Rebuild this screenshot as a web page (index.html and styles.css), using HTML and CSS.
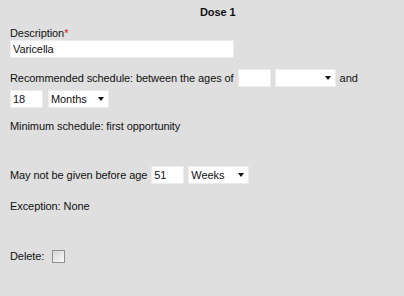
FILE: index.html
```html
<!DOCTYPE html>
<html lang="en">
<head>
    <meta charset="UTF-8">
    <title>Dose 1</title>
    <link rel="stylesheet" href="styles.css">
</head>
<body>
    <form class="dose-form">
        <h2 class="dose-title">Dose 1</h2>

        <label class="field-label" for="description">Description<span class="required">*</span></label>
        <input type="text" id="description" class="text-input wide" value="Varicella">

        <div class="row recommended">
            <span>Recommended schedule: between the ages of</span>
            <input type="text" class="text-input small" value="">
            <span class="select-wrap blank"><select class="select-input"><option></option></select></span>
            <span>and</span>
        </div>
        <div class="row second">
            <input type="text" class="text-input small" value="18">
            <span class="select-wrap"><select class="select-input"><option>Months</option></select></span>
        </div>

        <p class="info minimum">Minimum schedule: first opportunity</p>

        <div class="row not-before">
            <span>May not be given before age</span>
            <input type="text" class="text-input small" value="51">
            <span class="select-wrap"><select class="select-input"><option>Weeks</option></select></span>
        </div>

        <p class="info exception">Exception: None</p>

        <div class="row delete-row">
            <label for="deleteDose">Delete:</label>
            <input type="checkbox" id="deleteDose" class="check">
        </div>
    </form>
</body>
</html>
```

FILE: styles.css
```css
body {
    margin: 0;
    padding: 0 10px;
    background-color: #dfdfdf;
    font-family: "Liberation Sans", Arial, sans-serif;
    font-size: 11px;
    letter-spacing: -0.08px;
    line-height: 14px;
    color: #111111;
}

.dose-title {
    margin: 5px 0 0;
    padding-left: 190px;
    font-size: 11px;
    line-height: 14px;
    font-weight: bold;
}

.field-label {
    display: block;
    margin-top: 7px;
}

.required {
    color: #d02020;
}

.text-input,
.select-input {
    box-sizing: border-box;
    height: 18px;
    margin: 0;
    padding: 0 2px;
    border: 1px solid #ececec;
    background-color: #ffffff;
    font-family: inherit;
    font-size: 11px;
    letter-spacing: inherit;
    color: #111111;
    outline: none;
}

.text-input.wide {
    display: block;
    width: 224px;
}

.text-input.small {
    width: 33px;
}

.select-wrap {
    position: relative;
    display: inline-block;
}

.select-wrap::after {
    content: "";
    position: absolute;
    right: 5px;
    top: 7px;
    border-left: 3.5px solid transparent;
    border-right: 3.5px solid transparent;
    border-top: 4px solid #111111;
    pointer-events: none;
}

.select-input {
    appearance: none;
    -webkit-appearance: none;
    width: 61px;
    border-radius: 0;
}

.row {
    display: flex;
    align-items: center;
    gap: 4px;
}

.recommended {
    margin-top: 11px;
}

.second {
    margin-top: 3px;
    gap: 5px;
}

.info {
    margin: 0;
}

.minimum {
    margin-top: 11px;
}

.not-before {
    margin-top: 33px;
}

.exception {
    margin-top: 15px;
}

.delete-row {
    margin-top: 36px;
    gap: 8px;
}

.check {
    appearance: none;
    -webkit-appearance: none;
    box-sizing: border-box;
    width: 13px;
    height: 13px;
    margin: 0;
    border: 1px solid #8e8e8e;
    background: linear-gradient(135deg, #d4d4d4, #fbfbfb);
}
```
